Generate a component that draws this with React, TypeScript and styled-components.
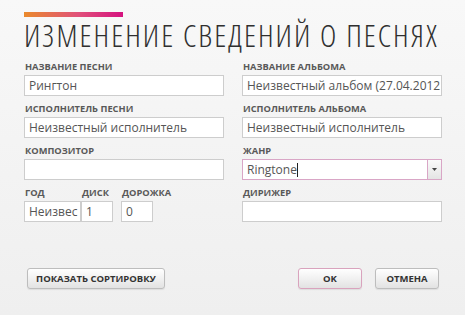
import React from "react";
import styled, { createGlobalStyle } from "styled-components";

const Global = createGlobalStyle`
  html, body { margin: 0; padding: 0; }
  body { font-family: "Open Sans", "DejaVu Sans", sans-serif; }
`;

const Page = styled.div`
  width: 465px;
  height: 315px;
  box-sizing: border-box;
  padding: 12px 23px 0 24px;
  background: linear-gradient(180deg, #f8f8f8 0%, #efefef 100%);
  display: flex;
  flex-direction: column;
  overflow: hidden;
`;

const Accent = styled.div`
  width: 99px;
  height: 5px;
  background: linear-gradient(90deg, #ea8a2c 0%, #e0507a 55%, #d5127f 100%);
`;

const Title = styled.h1`
  margin: 0;
  font-family: "Open Sans", sans-serif;
  font-weight: 300;
  font-stretch: 75%;
  font-size: 31px;
  letter-spacing: 2px;
  line-height: 36px;
  color: #2f2f2f;
  white-space: nowrap;
`;

const Form = styled.div`
  margin-top: 8px;
  display: grid;
  grid-template-columns: 200px 200px;
  column-gap: 18px;
  row-gap: 7px;
`;

const Field = styled.div<{ $w?: number; $gapLeft?: number }>`
  display: flex;
  flex-direction: column;
  width: ${(p) => (p.$w ? `${p.$w}px` : "auto")};
  margin-left: ${(p) => p.$gapLeft ?? 0}px;
`;

const Label = styled.div`
  font-size: 9.3px;
  font-weight: 700;
  line-height: 11px;
  color: #595959;
  margin: 0 0 3px 1px;
  white-space: nowrap;
`;

const Box = styled.div<{ $active?: boolean }>`
  box-sizing: border-box;
  height: 21px;
  background: #fff;
  border: 1px solid ${(p) => (p.$active ? "#d9a6c6" : "#cdcdcd")};
  display: flex;
  align-items: center;
  overflow: hidden;
`;

const Value = styled.div`
  flex: 1;
  min-width: 0;
  padding-left: 4px;
  font-size: 12px;
  color: #555;
  white-space: nowrap;
  overflow: hidden;
  line-height: 19px;
`;

const Caret = styled.span`
  display: inline-block;
  width: 1px;
  height: 14px;
  background: #222;
  vertical-align: -3px;
`;

const DropButton = styled.div`
  width: 13px;
  height: 100%;
  border-left: 1px solid #d9a6c6;
  background: linear-gradient(180deg, #fafafa, #e4e4e4);
  display: flex;
  align-items: center;
  justify-content: center;
`;

const SmallRow = styled.div`
  display: flex;
  align-items: flex-start;
`;

const Footer = styled.div`
  margin-top: auto;
  margin-bottom: 26px;
  display: flex;
  align-items: center;
  padding-left: 3px;
  padding-right: 3px;
`;

const Button = styled.button<{ $primary?: boolean; $w: number }>`
  box-sizing: border-box;
  width: ${(p) => p.$w}px;
  height: 21px;
  padding: 0;
  border-radius: 3px;
  border: 1px solid ${(p) => (p.$primary ? "#d9a3bd" : "#bdbdbd")};
  background: linear-gradient(180deg, #ffffff 0%, #f1f1f1 50%, #e2e2e2 100%);
  box-shadow: 0 1px 1px rgba(0, 0, 0, 0.08);
  font-family: "Open Sans", sans-serif;
  font-weight: 700;
  font-size: 9.5px;
  color: #333;
  white-space: nowrap;
`;

const Spacer = styled.div`
  flex: 1;
`;

const ButtonGap = styled.div`
  width: 13px;
`;

export default function App() {
  return (
    <>
      <Global />
      <Page>
        <Accent />
        <Title>ИЗМЕНЕНИЕ СВЕДЕНИЙ О ПЕСНЯХ</Title>
        <Form>
          <Field>
            <Label>НАЗВАНИЕ ПЕСНИ</Label>
            <Box><Value>Рингтон</Value></Box>
          </Field>
          <Field>
            <Label>НАЗВАНИЕ АЛЬБОМА</Label>
            <Box><Value>Неизвестный альбом (27.04.2012 17:52:10)</Value></Box>
          </Field>
          <Field>
            <Label>ИСПОЛНИТЕЛЬ ПЕСНИ</Label>
            <Box><Value>Неизвестный исполнитель</Value></Box>
          </Field>
          <Field>
            <Label>ИСПОЛНИТЕЛЬ АЛЬБОМА</Label>
            <Box><Value>Неизвестный исполнитель</Value></Box>
          </Field>
          <Field>
            <Label>КОМПОЗИТОР</Label>
            <Box><Value /></Box>
          </Field>
          <Field>
            <Label>ЖАНР</Label>
            <Box $active>
              <Value>Ringtone<Caret /></Value>
              <DropButton>
                <svg width="5" height="3" viewBox="0 0 5 3">
                  <path d="M0 0 L5 0 L2.5 3 Z" fill="#444" />
                </svg>
              </DropButton>
            </Box>
          </Field>
          <SmallRow>
            <Field $w={57}>
              <Label>ГОД</Label>
              <Box><Value>Неизвес</Value></Box>
            </Field>
            <Field $w={32}>
              <Label>ДИСК</Label>
              <Box><Value>1</Value></Box>
            </Field>
            <Field $w={32} $gapLeft={8}>
              <Label>ДОРОЖКА</Label>
              <Box><Value>0</Value></Box>
            </Field>
          </SmallRow>
          <Field>
            <Label>ДИРИЖЕР</Label>
            <Box><Value /></Box>
          </Field>
        </Form>
        <Footer>
          <Button $w={138}>ПОКАЗАТЬ СОРТИРОВКУ</Button>
          <Spacer />
          <Button $w={64} $primary>OK</Button>
          <ButtonGap />
          <Button $w={64}>ОТМЕНА</Button>
        </Footer>
      </Page>
    </>
  );
}
